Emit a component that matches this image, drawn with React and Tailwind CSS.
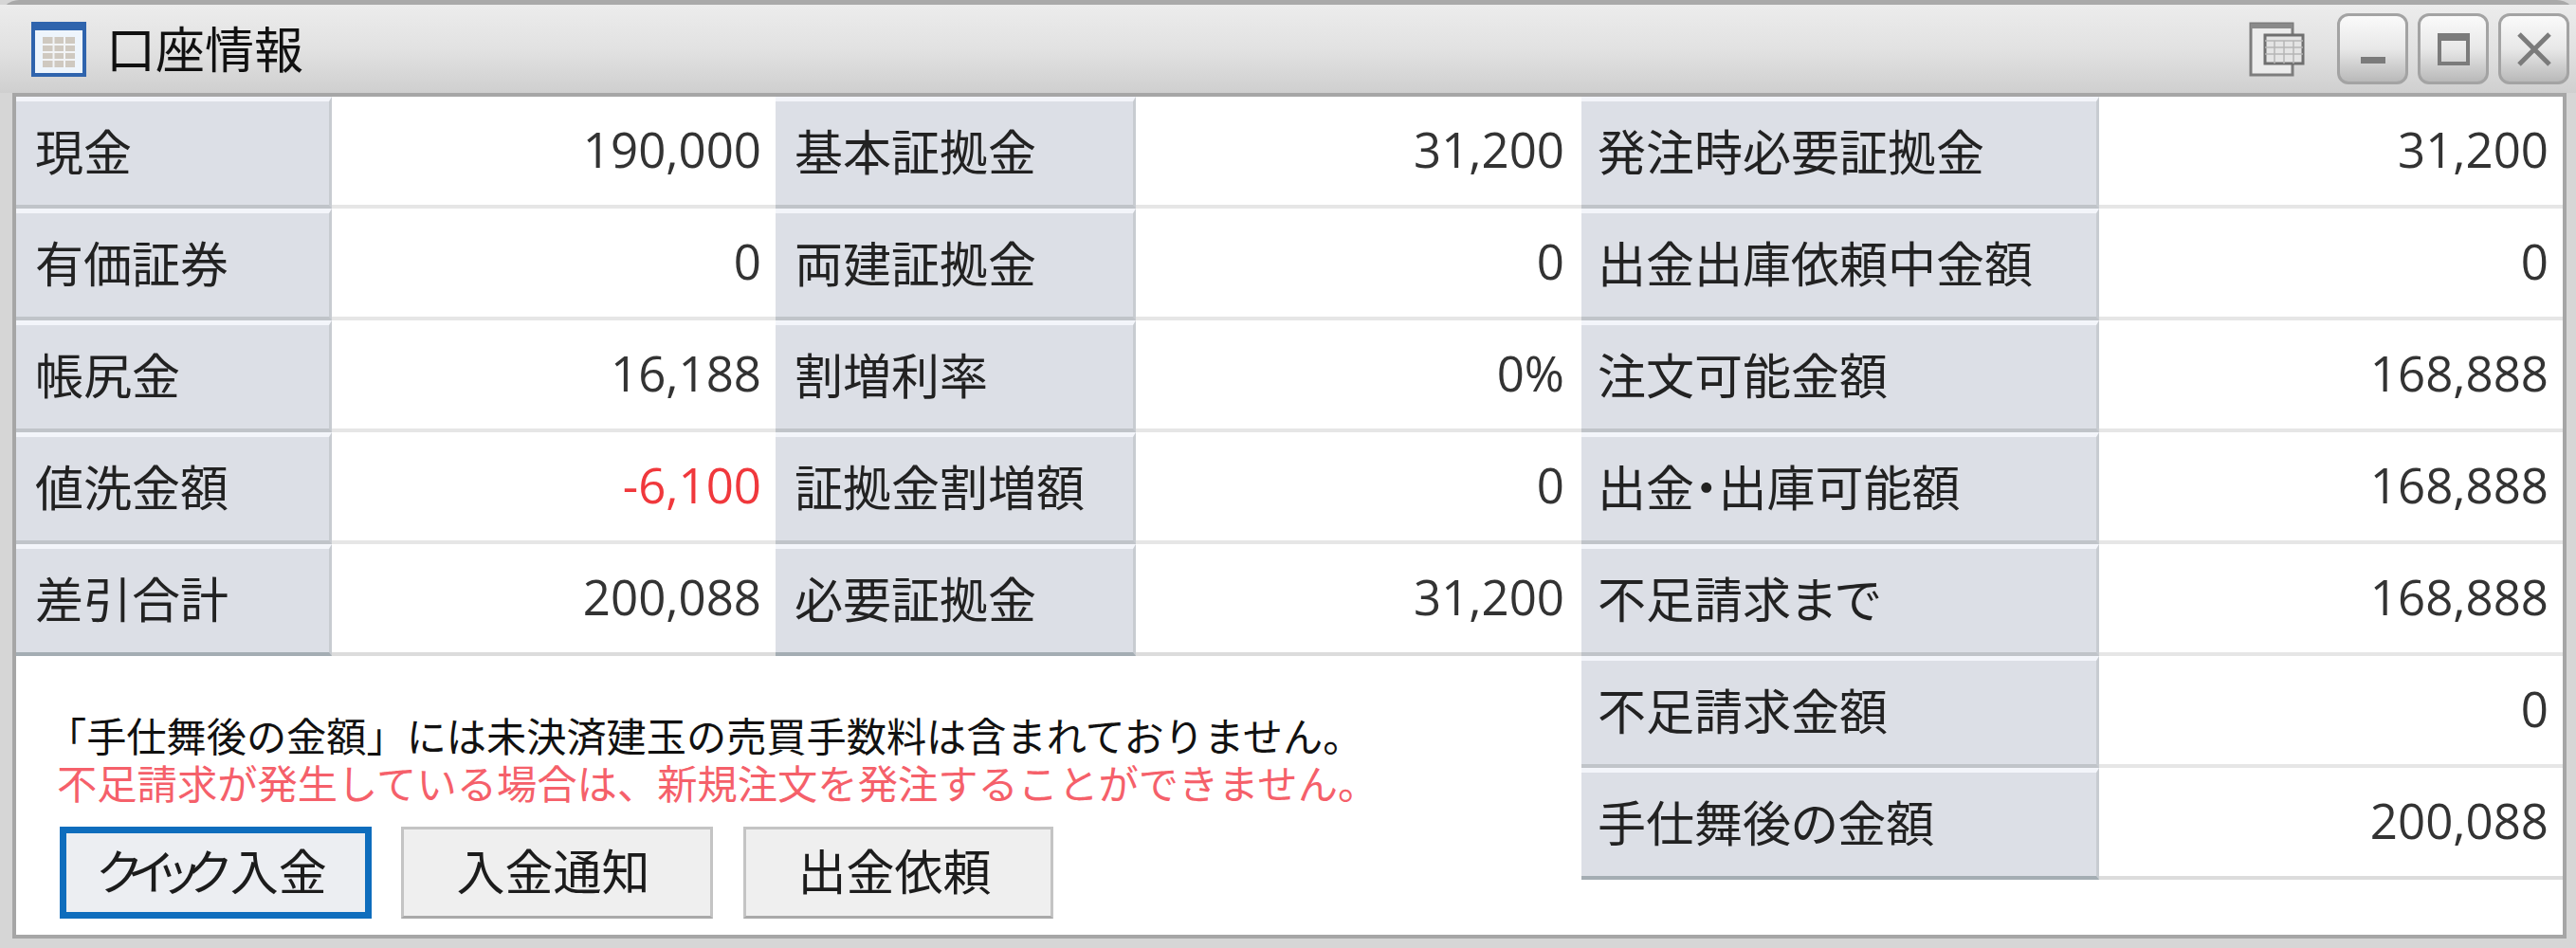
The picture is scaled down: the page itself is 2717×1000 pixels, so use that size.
import React from "react";

const font = "font-['Noto_Sans_CJK_JP','Noto_Sans',sans-serif]";
const numFont = "font-['Open_Sans','Noto_Sans_CJK_JP',sans-serif]";

const leftRows = [
  ["現金", "190,000", "基本証拠金", "31,200"],
  ["有価証券", "0", "両建証拠金", "0"],
  ["帳尻金", "16,188", "割増利率", "0%"],
  ["値洗金額", "-6,100", "証拠金割増額", "0"],
  ["差引合計", "200,088", "必要証拠金", "31,200"],
];

const rightRows = [
  ["発注時必要証拠金", "31,200"],
  ["出金出庫依頼中金額", "0"],
  ["注文可能金額", "168,888"],
  ["出金・出庫可能額", "168,888"],
  ["不足請求まで", "168,888"],
  ["不足請求金額", "0"],
  ["手仕舞後の金額", "200,088"],
];

function Label({ text, last, pl = "pl-[20px]" }) {
  return (
    <div
      className={`h-[118px] flex items-center ${pl} pb-[7px] text-[51px] text-[#222] bg-[#dcdfe6] border-t-[5px] border-t-[#f3f5fa] border-b-[4px] border-r-[3px] border-r-[#c8ccd1] [font-feature-settings:'palt'] ${
        last ? "border-b-[#a4adb3]" : "border-b-[#c0c4c9]"
      }`}
    >
      {text}
    </div>
  );
}

function Value({ text, last, pr = "pr-[15px]" }) {
  return (
    <div
      className={`h-[118px] flex items-center justify-end ${pr} pb-[4px] ${numFont} text-[51px] border-b-[4px] ${
        last ? "border-b-[#dcdcdc]" : "border-b-[#e6e6e6]"
      } ${text.startsWith("-") ? "text-[#f0383c]" : "text-[#333]"}`}
    >
      {text}
    </div>
  );
}

function Btn({ children, primary, w }) {
  return (
    <button
      className={`${w} h-[97px] flex items-center justify-center pr-[8px] pb-[6px] text-[51px] text-[#1c1c1c] [font-feature-settings:'palt'] ${
        primary
          ? "border-[7px] border-[#0e6dbd] bg-[#eceef2]"
          : "border-[3px] border-[#c4c4c4] border-b-[#a9a9a9] bg-[#efefef]"
      }`}
    >
      {children}
    </button>
  );
}

function WinBtn({ children }) {
  return (
    <div className="w-[75px] h-[75px] flex items-center justify-center rounded-[12px] border-[3px] border-[#a3a3a3] bg-gradient-to-b from-[#fafafa] via-[#e8e8e8] to-[#b9b9b9]">
      {children}
    </div>
  );
}

export default function App() {
  return (
    <div className={`w-[2717px] h-[1000px] overflow-hidden bg-[#d6d6d6] ${font}`}>
      <div className="h-full flex flex-col rounded-t-[20px] border-t-[5px] border-t-[#a9a9a9]">
        {/* title bar */}
        <div className="h-[93px] shrink-0 flex items-center pl-[33px] pr-[7px] bg-gradient-to-b from-[#ececec] via-[#e2e2e2] to-[#cfcfcf]">
          <svg width="58" height="58" viewBox="0 0 58 58" className="shrink-0">
            <rect x="2" y="2" width="54" height="54" fill="#eef5fc" stroke="#2f64ad" strokeWidth="4" />
            <rect x="2" y="2" width="54" height="7" fill="#2f64ad" />
            <rect x="12" y="16" width="34" height="32" fill="#cfc9c0" />
            <path d="M23.5 16v32M35 16v32M12 24h34M12 32h34M12 40h34" stroke="#f2f4f6" strokeWidth="2" fill="none" />
          </svg>
          <div className="ml-[21px] mb-[4px] text-[52px] leading-none text-[#111]">口座情報</div>
          <div className="ml-auto flex items-center">
            <svg width="60" height="60" viewBox="0 0 60 60" className="mr-[33px]">
              <path d="M2 3h44v54H2z" fill="#ececec" stroke="#7d7d7d" strokeWidth="3" />
              <rect x="2" y="3" width="44" height="5" fill="#8a8a8a" />
              <rect x="17" y="15" width="40" height="30" fill="#e4e4e4" stroke="#6f6f6f" strokeWidth="3" />
              <path d="M17 21h40M17 28h40M17 35h40M27 21v24M37 21v24M47 21v24" stroke="#b5b5b5" strokeWidth="1.5" fill="none" />
            </svg>
            <div className="flex gap-[10px]">
              <WinBtn>
                <div className="w-[26px] h-[7px] mt-[24px] bg-[#7b7b7b]" />
              </WinBtn>
              <WinBtn>
                <div className="w-[34px] h-[34px] border-[4px] border-t-[8px] border-[#7b7b7b]" />
              </WinBtn>
              <WinBtn>
                <svg width="38" height="38" viewBox="0 0 38 38">
                  <path d="M3 3l32 32M35 3L3 35" stroke="#7b7b7b" strokeWidth="5" fill="none" />
                </svg>
              </WinBtn>
            </div>
          </div>
        </div>

        {/* body */}
        <div className="ml-[13px] mr-[10px] h-[892px] shrink-0 border-[4px] border-[#a6a6a6] bg-white flex overflow-hidden">
          <div className="w-[1651px] shrink-0">
            <div className="grid grid-cols-[333px_468px_380px_470px]">
              {leftRows.map((r, i) => (
                <React.Fragment key={r[0]}>
                  <Label text={r[0]} last={i === 4} />
                  <Value text={r[1]} last={i === 4} />
                  <Label text={r[2]} last={i === 4} />
                  <Value text={r[3]} last={i === 4} pr="pr-[18px]" />
                </React.Fragment>
              ))}
            </div>
            <div className="pl-[46px] pt-[58px]">
              <p className="-ml-[14px] text-[42.2px] leading-[50px] text-[#111] whitespace-nowrap">
                「手仕舞後の金額」には未決済建玉の売買手数料は含まれておりません。
              </p>
              <p className="-ml-[3px] text-[42.3px] leading-[50px] text-[#f5606a] whitespace-nowrap">
                不足請求が発生している場合は、新規注文を発注することができません。
              </p>
              <div className="mt-[22px] flex">
                <Btn primary w="w-[329px]">
                  <span className="tracking-[-12px]">クイック</span>
                  <span className="ml-[12px]">入金</span>
                </Btn>
                <div className="ml-[31px]">
                  <Btn w="w-[329px]">入金通知</Btn>
                </div>
                <div className="ml-[32px]">
                  <Btn w="w-[327px]">出金依頼</Btn>
                </div>
              </div>
            </div>
          </div>
          <div className="flex-1 grid grid-cols-[546px_1fr] content-start">
            {rightRows.map((r, i) => (
              <React.Fragment key={r[0]}>
                <Label text={r[0]} last={i === 6} pl="pl-[17px]" />
                <Value text={r[1]} last={i === 6} />
              </React.Fragment>
            ))}
          </div>
        </div>
      </div>
    </div>
  );
}
